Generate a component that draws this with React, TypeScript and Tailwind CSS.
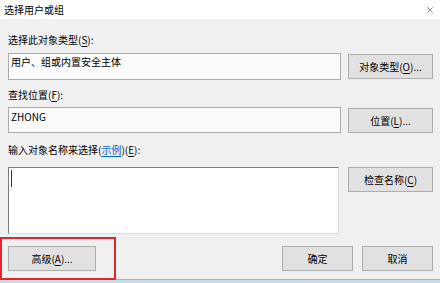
import { X } from "lucide-react";

const FONT = { fontFamily: '"Noto Sans CJK SC", "Liberation Sans", sans-serif' };

function Btn({ children, className = "" }: { children: React.ReactNode; className?: string }) {
  return (
    <button
      className={`h-[25px] flex items-center justify-center bg-[#e1e1e1] border border-[#adadad] text-[10px] text-black leading-none ${className}`}
    >
      {children}
    </button>
  );
}

function U({ children }: { children: React.ReactNode }) {
  return <span className="underline underline-offset-[2px]">{children}</span>;
}

export default function App() {
  return (
    <div
      className="w-[440px] h-[283px] bg-[#f0f0f0] flex flex-col relative overflow-hidden text-black"
      style={FONT}
    >
      {/* Title bar */}
      <div className="h-[19px] bg-white flex items-center justify-between pl-[4px] pr-[5px]">
        <span className="text-[10px] leading-none">选择用户或组</span>
        <X className="w-[10px] h-[10px] text-[#333]" strokeWidth={1.3} />
      </div>

      {/* Body */}
      <div className="flex-1 flex flex-col pl-[8px] pr-[7px] text-[10px]">
        <div className="mt-[13px] h-[16px] leading-[16px]">
          选择此对象类型(<U>S</U>):
        </div>
        <div className="mt-[5px] flex justify-between items-start">
          <div className="w-[333px] h-[27px] border border-[#acacac] bg-[#fbfbfb] pl-[2px] pt-[1px] leading-[14px]">
            用户、组或内置安全主体
          </div>
          <Btn className="mt-[1px] w-[85px]">
            对象类型(<U>O</U>)...
          </Btn>
        </div>

        <div className="mt-[7px] h-[16px] leading-[16px]">
          查找位置(<U>F</U>):
        </div>
        <div className="mt-[4px] flex justify-between items-start">
          <div className="w-[333px] h-[26px] border border-[#acacac] bg-[#fbfbfb] pl-[2px] pt-[2px] leading-[14px]">
            ZHONG
          </div>
          <Btn className="mt-[1px] w-[85px]">
            位置(<U>L</U>)...
          </Btn>
        </div>

        <div className="mt-[9px] h-[16px] leading-[16px]">
          输入对象名称来选择(<span className="text-[#0066cc] underline underline-offset-[2px]">示例</span>)(<U>E</U>):
        </div>
        <div className="mt-[9px] flex justify-between items-start">
          <div className="w-[331px] h-[67px] bg-white border border-t-[#7a7a7a] border-l-[#7a7a7a] border-r-[#dcdcdc] border-b-[#dcdcdc] pl-[2px] pt-[2px]">
            <div className="w-px h-[17px] bg-[#333]" />
          </div>
          <Btn className="w-[85px]">
            检查名称(<U>C</U>)
          </Btn>
        </div>

        <div className="mt-[12px] flex items-start">
          <Btn className="w-[88px]">
            高级(<U>A</U>)...
          </Btn>
          <div className="ml-auto flex gap-[9px]">
            <Btn className="w-[71px]">确定</Btn>
            <Btn className="w-[71px]">取消</Btn>
          </div>
        </div>
      </div>

      {/* Bottom strip */}
      <div className="h-[4px] border-t border-[#a9b4bd] bg-[#c9dceb]" />

      {/* Red highlight annotation */}
      <div className="absolute left-0 top-[237px] w-[116px] h-[43px] border-2 border-[#e3262b]" />
    </div>
  );
}
